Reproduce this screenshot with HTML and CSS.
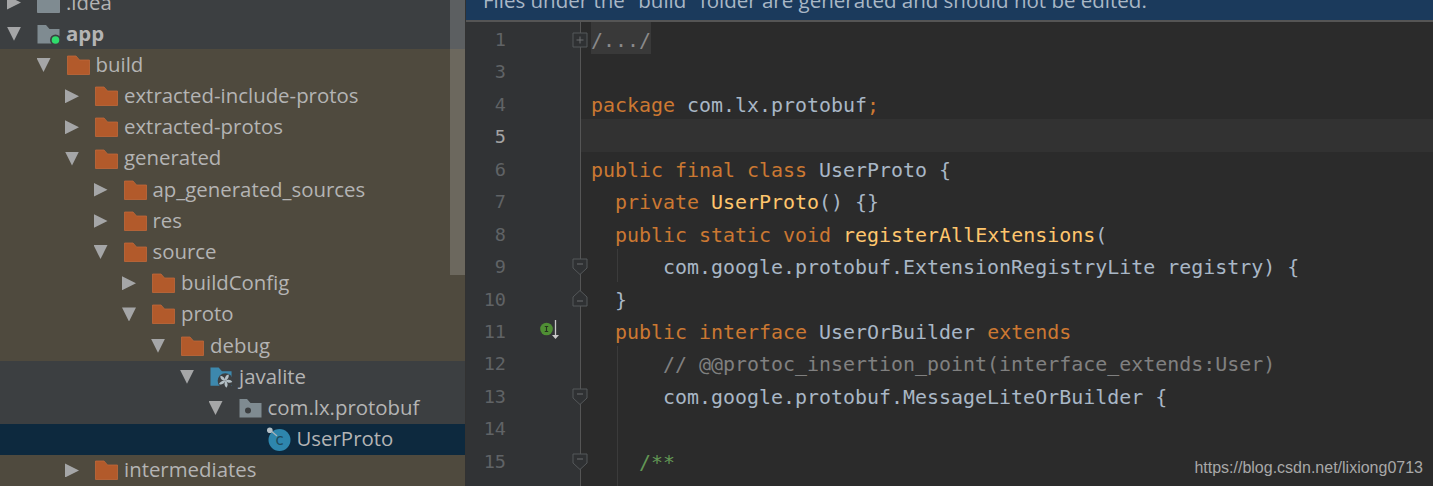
FILE: index.html
```html
<!DOCTYPE html>
<html lang="en">
<head>
<meta charset="utf-8">
<title>UserProto</title>
<link rel="stylesheet" href="styles.css">
</head>
<body>
<svg class="defs" width="0" height="0" aria-hidden="true">
  <symbol id="folder" viewBox="0 0 23 20"><path d="M0.5 1h8.5l3.500 4h10v14.500h-22z" fill="#b25a2b" stroke="#c0683a" stroke-width=".8"/></symbol>
  <symbol id="gfolder" viewBox="0 0 23 20"><path d="M0.5 1h8.500l3.500 4h10v14.500h-22z" fill="#7f8b91" stroke="#8a969c" stroke-width=".8"/></symbol>
  <symbol id="module" viewBox="0 0 23 20"><path d="M0.500 1h8.500l3.500 4h10v14.500h-22z" fill="#7f8b91"/><circle cx="18.500" cy="16" r="5.500" fill="#3c3f41"/><circle cx="18.500" cy="16" r="3.800" fill="#2fdc6c"/></symbol>
  <symbol id="source" viewBox="0 0 24 22"><path d="M0.500 1h8.500l3.500 4h10v15h-22z" fill="#3d88ad"/><circle cx="16" cy="15" r="8" fill="#3c3f41"/><g fill="#b4bfc5"><path d="M16 15c-1-2.500 0-6 3.500-6.500.5 2.500-.5 5-3.500 6.500z"/><path d="M16 15c-1-2.500 0-6 3.500-6.500.5 2.500-.5 5-3.500 6.500z" transform="rotate(72 16 15)"/><path d="M16 15c-1-2.500 0-6 3.500-6.500.5 2.500-.5 5-3.500 6.500z" transform="rotate(144 16 15)"/><path d="M16 15c-1-2.500 0-6 3.500-6.500.5 2.500-.5 5-3.500 6.500z" transform="rotate(216 16 15)"/><path d="M16 15c-1-2.500 0-6 3.500-6.500.5 2.500-.5 5-3.500 6.500z" transform="rotate(288 16 15)"/></g></symbol>
  <symbol id="pkg" viewBox="0 0 23 20"><path d="M0.500 1h7.500l3.500 4h11v14.500h-22z" fill="#7f8b91"/><circle cx="9" cy="12.500" r="3" fill="#3c3f41"/></symbol>
  <symbol id="proto" viewBox="0 0 24 24"><circle cx="12.500" cy="13" r="11" fill="#2e86ad"/><text x="12.500" y="18" font-size="15" font-family="DejaVu Sans" fill="#1f4a5c" text-anchor="middle">c</text><path d="M3 3l7 6" stroke="#a9b4ba" stroke-width="1.200"/><circle cx="2.800" cy="3.200" r="2.800" fill="#b4bfc5"/></symbol>
  <symbol id="fold-end" viewBox="0 0 16 18"><path d="M1 1h14v9l-7 6.500-7-6.500z" fill="#2f3133" stroke="#55585a"/><path d="M5 6h6" stroke="#6a6d6f"/></symbol>
  <symbol id="fold-start" viewBox="0 0 16 18"><path d="M1 17h14v-9l-7-6.500-7 6.500z" fill="#2f3133" stroke="#55585a"/><path d="M5 12h6" stroke="#6a6d6f"/></symbol>
  <symbol id="fold-plus" viewBox="0 0 16 16"><path d="M1 1h14v14h-14z" fill="#2f3133" stroke="#55585a"/><path d="M4.500 8h7M8 4.500v7" stroke="#6a6d6f"/></symbol>
</svg>
<div class="window">
  <aside class="tree">
    <div class="scrollbar"></div>
    <div class="row gray d0"><i class="arrow right"></i><svg class="ico"><use href="#gfolder"/></svg><span>.idea</span></div>
    <div class="row gray d0"><i class="arrow down"></i><svg class="ico"><use href="#module"/></svg><b>app</b></div>
    <div class="row d1"><i class="arrow down"></i><svg class="ico"><use href="#folder"/></svg><span>build</span></div>
    <div class="row d2"><i class="arrow right"></i><svg class="ico"><use href="#folder"/></svg><span>extracted-include-protos</span></div>
    <div class="row d2"><i class="arrow right"></i><svg class="ico"><use href="#folder"/></svg><span>extracted-protos</span></div>
    <div class="row d2"><i class="arrow down"></i><svg class="ico"><use href="#folder"/></svg><span>generated</span></div>
    <div class="row d3"><i class="arrow right"></i><svg class="ico"><use href="#folder"/></svg><span>ap_generated_sources</span></div>
    <div class="row d3"><i class="arrow right"></i><svg class="ico"><use href="#folder"/></svg><span>res</span></div>
    <div class="row d3"><i class="arrow down"></i><svg class="ico"><use href="#folder"/></svg><span>source</span></div>
    <div class="row d4"><i class="arrow right"></i><svg class="ico"><use href="#folder"/></svg><span>buildConfig</span></div>
    <div class="row d4"><i class="arrow down"></i><svg class="ico"><use href="#folder"/></svg><span>proto</span></div>
    <div class="row d5"><i class="arrow down"></i><svg class="ico"><use href="#folder"/></svg><span>debug</span></div>
    <div class="row gray d6"><i class="arrow down"></i><svg class="ico"><use href="#source"/></svg><span>javalite</span></div>
    <div class="row gray d7"><i class="arrow down"></i><svg class="ico"><use href="#pkg"/></svg><span>com.lx.protobuf</span></div>
    <div class="row selected d8"><i class="arrow none"></i><svg class="ico big"><use href="#proto"/></svg><span>UserProto</span></div>
    <div class="row d2"><i class="arrow right"></i><svg class="ico"><use href="#folder"/></svg><span>intermediates</span></div>
  </aside>
  <main class="editor">
    <div class="banner"><span>Files under the "build" folder are generated and should not be edited.</span></div>
    <div class="code">
      <div class="line"><div class="gutter"><span class="num">1</span><svg class="fold plus"><use href="#fold-plus"/></svg></div><div class="text"><span class="folded">/.../</span></div></div>
      <div class="line"><div class="gutter"><span class="num">3</span></div><div class="text"></div></div>
      <div class="line"><div class="gutter"><span class="num">4</span></div><div class="text"><span class="k">package</span> com.lx.protobuf<span class="k">;</span></div></div>
      <div class="line current"><div class="gutter"><span class="num">5</span></div><div class="text"></div></div>
      <div class="line"><div class="gutter"><span class="num">6</span></div><div class="text"><span class="k">public final class</span> UserProto {</div></div>
      <div class="line"><div class="gutter"><span class="num">7</span></div><div class="text">  <span class="k">private</span> <span class="m">UserProto</span>() {}</div></div>
      <div class="line"><div class="gutter"><span class="num">8</span></div><div class="text">  <span class="k">public static void</span> <span class="m">registerAllExtensions</span>(</div></div>
      <div class="line"><div class="gutter"><span class="num">9</span><svg class="fold"><use href="#fold-end"/></svg></div><div class="text guide">      com.google.protobuf.ExtensionRegistryLite registry) {</div></div>
      <div class="line"><div class="gutter"><span class="num">10</span><svg class="fold up"><use href="#fold-start"/></svg></div><div class="text">  }</div></div>
      <div class="line"><div class="gutter"><span class="num">11</span><svg class="impl" viewBox="0 0 20 20"><circle cx="6.500" cy="9" r="6.300" fill="#4f8f34"/><path d="M4.800 6.500h3.400M6.500 6.500v5M4.800 11.500h3.400" stroke="#26331f" stroke-width="1.100"/><path d="M15.500 0v16" stroke="#c8c8c8" stroke-width="1.300"/><path d="M12 15h7l-3.500 4z" fill="#c8c8c8"/></svg></div><div class="text">  <span class="k">public interface</span> UserOrBuilder <span class="k">extends</span></div></div>
      <div class="line"><div class="gutter"><span class="num">12</span></div><div class="text guide"><span class="c">      // @@protoc_insertion_point(interface_extends:User)</span></div></div>
      <div class="line"><div class="gutter"><span class="num">13</span><svg class="fold"><use href="#fold-end"/></svg></div><div class="text guide">      com.google.protobuf.MessageLiteOrBuilder {</div></div>
      <div class="line"><div class="gutter"><span class="num">14</span></div><div class="text guide"></div></div>
      <div class="line"><div class="gutter"><span class="num">15</span><svg class="fold"><use href="#fold-end"/></svg></div><div class="text guide"><span class="d">    /**</span></div></div>
      <div class="line"><div class="gutter"></div><div class="text guide"></div></div>
    </div>
    <div class="watermark">https://blog.csdn.net/lixiong0713</div>
  </main>
</div>
</body>
</html>
```
FILE: styles.css
```css
* { box-sizing: border-box; }
html, body { margin: 0; height: 100%; background: #2b2b2b; overflow: hidden; }
.defs { position: absolute; }
.window { display: flex; width: 1433px; height: 486px; overflow: hidden; }

/* project tree */
.tree {
  position: relative;
  flex: 0 0 466px;
  height: 486px;
  overflow: hidden;
  background: #4f4a3e;
  border-right: 1px solid #323232;
  font: 20.400px/31.200px "Open Sans", "Noto Sans", sans-serif;
  color: #b4b4b4;
}
.row {
  display: flex;
  align-items: center;
  height: 31.200px;
  white-space: nowrap;
}
.scrollbar + .row { margin-top: -13px; }
.row.gray { background: #3c3f41; }
.row.selected { background: #0d293e; }
.row b { font-weight: 700; margin-bottom: 1px; }
.row span { margin-bottom: 1px; }
.d0 { padding-left: 7px; }
.d1 { padding-left: 36.500px; }
.d2 { padding-left: 65px; }
.d3 { padding-left: 93.500px; }
.d4 { padding-left: 122px; }
.d5 { padding-left: 151px; }
.d6 { padding-left: 180px; }
.d7 { padding-left: 208.500px; }
.d8 { padding-left: 237.500px; }
.arrow { flex: 0 0 14px; width: 14px; height: 14px; margin-right: 16px; }
.arrow.right { background: #a5a6a7; clip-path: polygon(0 0, 100% 50%, 0 100%); }
.arrow.down { background: #a5a6a7; clip-path: polygon(0 0, 100% 0, 50% 100%); }
.ico { flex: 0 0 23px; width: 23px; height: 22px; margin-right: 6px; }
.ico.big { flex-basis: 24px; width: 24px; height: 24px; margin-left: -1px; }
.scrollbar {
  position: absolute;
  top: 0;
  left: 450px;
  width: 15px;
  height: 275px;
  background: rgba(255, 255, 255, .17);
}

/* editor */
.editor { position: relative; flex: 1; min-width: 0; height: 486px; overflow: hidden; }
.banner {
  height: 22px;
  padding-left: 17px;
  background: #1b3a5c;
  border-bottom: 2px solid #555;
  overflow: hidden;
  font: 20.500px/20px "Open Sans", "Noto Sans", sans-serif;
  color: #a9b7c6;
  white-space: nowrap;
}
.banner span { display: block; margin-top: -10px; }
.code {
  font: 19.950px/36.400px "DejaVu Sans Mono", monospace;
  color: #a9b7c6;
  background: #2b2b2b;
}
.line { display: flex; height: 32.450px; }
.gutter {
  position: relative;
  flex: 0 0 115px;
  display: flex;
  justify-content: flex-end;
  padding-right: 74px;
  background: #313335;
  color: #606366;
  border-right: 1px solid #555;
  font-size: 18.500px;
}
.text { position: relative; flex: 1; padding-left: 10px; white-space: pre; }
.current .text { background: #323232; }
.current .num { color: #a4a3a3; }
.guide::before {
  content: "";
  position: absolute;
  left: 36px;
  top: 0;
  bottom: 0;
  border-left: 1px solid #3b3b3b;
}
.k { color: #cc7832; }
.m { color: #ffc66d; }
.c { color: #808080; }
.d { color: #629755; }
.folded { display: block; width: 60px; height: 32.450px; background: #393939; color: #8a8a8a; }
.fold {
  position: absolute;
  right: -8px;
  top: 9px;
  width: 16px;
  height: 18px;
}
.fold.up { top: 7px; }
.fold.plus { height: 16px; top: 10px; }
.impl {
  position: absolute;
  left: 73.500px;
  top: 6px;
  width: 20px;
  height: 20px;
}
.watermark {
  position: absolute;
  right: 10px;
  bottom: 8px;
  font: 16px/20px "Liberation Sans", Arial, sans-serif;
  color: #a8a8a8;
}
```
